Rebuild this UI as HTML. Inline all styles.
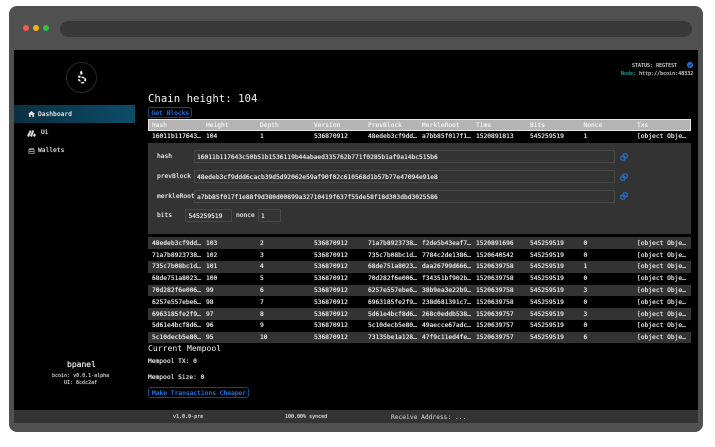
<!DOCTYPE html>
<html><head><meta charset="utf-8">
<style>
html,body{margin:0;padding:0;background:#fff;width:715px;height:447px;overflow:hidden}
body{position:relative;font-family:"DejaVu Sans Mono","Liberation Mono",monospace;color:#e8e8e8}
div,span{position:absolute;box-sizing:border-box;white-space:pre;line-height:1}
.b{filter:blur(.3px);text-shadow:0 0 .6px currentColor}
.t{font-size:6.25px}
.s{font-size:5px}
.row{left:148px;width:543px;height:11.8px}
.row span{top:3.6px;font-size:6.25px;color:#ececec}
.c0{left:4px}.c1{left:58px}.c2{left:112px}.c3{left:166px}.c4{left:220px}.c5{left:274px}.c6{left:328px}.c7{left:382px}.c8{left:435.5px}.c9{left:489px}
.g{background:#333}
.k{background:#000}
.inp{background:#333;border:1px solid #484848;height:13px;font-size:6.25px;padding:3.5px 0 0 2px;color:#ececec}
.btn{border:1px solid #114785;border-radius:3px;background:#000;color:#2379ea;font-size:6.25px;height:11px;padding:2.5px 0 0 2.5px}
.hd span{color:#f2f2f2}
</style></head>
<body>
<div style="left:9px;top:6px;width:694px;height:426px;background:#505050;border-radius:8px"></div>
<div style="left:60px;top:21px;width:632px;height:16px;background:#383838;border-radius:8px"></div>
<div style="left:23px;top:25px;width:6px;height:6px;border-radius:50%;background:#f4594f"></div>
<div style="left:33px;top:25px;width:6px;height:6px;border-radius:50%;background:#f5b011"></div>
<div style="left:43px;top:25px;width:6px;height:6px;border-radius:50%;background:#28c63f"></div>
<div style="left:14px;top:50px;width:684px;height:360px;background:#000"></div>
<div style="left:14px;top:410px;width:684px;height:13px;background:#333"></div>

<!-- sidebar -->
<div style="left:66px;top:62px;width:31px;height:31px;border:1px solid #2a2a2a;border-radius:50%"></div>
<svg style="position:absolute;left:74px;top:70px" width="15" height="17" viewBox="0 0 15 17"><g fill="#f4f4f4"><path d="M6 1.500l2-.5.6 3-2 1z"/><path d="M4.500 5.500l2.200.5-.5 2-2.200-.5z"/><path d="M4 9l2.200.5.5 2-2.200-.5z"/><path d="M7 12l3-.3.5 1.500-3 .4z"/><path d="M10.500 8l1.700.5-.3 3-1.700-.5z"/><path d="M7.500 6.500l3 .5-.5 1.500-2.500-.5z"/></g></svg>
<div style="left:14px;top:105px;width:121px;height:18px;background:linear-gradient(90deg,#0a3042,#0c4c68)"></div>
<svg style="position:absolute;left:28px;top:111px" width="7" height="6" viewBox="0 0 8 7"><path d="M4 0L8 3.500H7V7H5V4.500H3V7H1V3.500H0z" fill="#ddd"/></svg>
<div class="t b" style="left:38px;top:111.500px;color:#e8e8e8">Dashboard</div>
<svg style="position:absolute;left:27px;top:128.500px" width="9" height="8" viewBox="0 0 9 8"><path d="M0 7L3 1l1.500 1L2 8zM3 7l2.500-6L7 2 5 8zM6 7l1-3 2 2-1 2z" fill="#ddd"/></svg>
<div class="t b" style="left:41px;top:130px">Ui</div>
<svg style="position:absolute;left:27.500px;top:147px" width="7" height="7" viewBox="0 0 8 8"><path d="M1 3h6v4.500H1zM2 3V1.500h4V3M1 5h6" fill="none" stroke="#bbb" stroke-width=".8"/></svg>
<div class="t b" style="left:38px;top:148px;color:#ddd">Wallets</div>
<div class="b" style="left:67px;top:361px;font-size:8px">bpanel</div>
<div class="s b" style="left:52px;top:374px;color:#ccc">bcoin: v0.0.1-alpha</div>
<div class="s b" style="left:64px;top:381px;color:#ccc">UI: 8cdc2af</div>

<!-- top right -->
<div class="s b" style="left:632px;top:64px;color:#ccc">STATUS: REGTEST</div>
<div style="left:687px;top:62px;width:6px;height:6px;border-radius:50%;background:#2a75d6"></div>
<svg style="position:absolute;left:687px;top:62px" width="6" height="6" viewBox="0 0 6 6"><path d="M1.500 3l1.200 1.200L4.600 2" fill="none" stroke="#000" stroke-width=".8"/></svg>
<div class="s b" style="left:621px;top:72px;color:#ccc"><span style="position:static;color:#0c9c94">Node:</span> http://bcoin:48332</div>

<!-- main -->
<div class="b" style="left:148px;top:94px;font-size:10.700px;color:#f0f0f0;text-shadow:none">Chain height: 104</div>
<div class="btn b" style="left:148px;top:107px;width:44px">Get Blocks</div>

<div style="left:148px;top:119px;width:543px;height:12px;background:#b4b4b4;border:1px solid #e8e8e8;border-bottom-width:1.500px"></div>
<div class="row hd b" style="top:119px;height:12px"><span class="c0">Hash</span><span class="c1">Height</span><span class="c2">Depth</span><span class="c3">Version</span><span class="c4">PrevBlock</span><span class="c5">MerkleRoot</span><span class="c6">Time</span><span class="c7">Bits</span><span class="c8">Nonce</span><span class="c9">Txs</span></div>
<div class="row k b" style="top:131px"><span class="c0" style="top:3px">16011b117643…</span><span class="c1" style="top:3px">104</span><span class="c2" style="top:3px">1</span><span class="c3" style="top:3px">536870912</span><span class="c4" style="top:3px">48edeb3cf9dd…</span><span class="c5" style="top:3px">a7bb85f017f1…</span><span class="c6" style="top:3px">1520891813</span><span class="c7" style="top:3px">545259519</span><span class="c8" style="top:3px">1</span><span class="c9" style="top:3px">[object Obje…</span></div>

<div class="g" style="left:148px;top:142.500px;width:543px;height:91.500px"></div>
<div class="t b" style="left:157px;top:154px">hash</div>
<div class="inp b" style="left:194px;top:150px;width:421px">16011b117643c50b51b1536119b44abaed335762b771f0285b1af9a14bc515b6</div>
<div class="t b" style="left:157px;top:173.500px">prevBlock</div>
<div class="inp b" style="left:194px;top:170px;width:421px">48edeb3cf9ddd6cacb39d5d92062e59af90f02c610568d1b57b77e47094e91e8</div>
<div class="t b" style="left:157px;top:193.500px">merkleRoot</div>
<div class="inp b" style="left:194px;top:190px;width:421px">a7bb85f017f1e88f9d380d00899a32710419f637f55de58f18d303dbd3025586</div>
<div class="t b" style="left:157px;top:213px">bits</div>
<div class="inp b" style="left:185px;top:209px;width:47px;padding-left:2.500px">545259519</div>
<div class="t b" style="left:236px;top:213px">nonce</div>
<div class="inp b" style="left:258px;top:209px;width:23px">1</div>

<svg style="position:absolute;left:620px;top:153px" width="8" height="8" viewBox="0 0 8 8"><g fill="none" stroke="#2a6fc9" stroke-width="1.100"><rect x="3" y=".8" width="4.200" height="4.200" rx="1.500"/><rect x=".8" y="3" width="4.200" height="4.200" rx="1.500"/></g></svg>
<svg style="position:absolute;left:620px;top:172.500px" width="8" height="8" viewBox="0 0 8 8"><g fill="none" stroke="#2a6fc9" stroke-width="1.100"><rect x="3" y=".8" width="4.200" height="4.200" rx="1.500"/><rect x=".8" y="3" width="4.200" height="4.200" rx="1.500"/></g></svg>
<svg style="position:absolute;left:620px;top:192px" width="8" height="8" viewBox="0 0 8 8"><g fill="none" stroke="#2a6fc9" stroke-width="1.100"><rect x="3" y=".8" width="4.200" height="4.200" rx="1.500"/><rect x=".8" y="3" width="4.200" height="4.200" rx="1.500"/></g></svg>

<div class="row g b" style="top:237.300px"><span class="c0">48edeb3cf9dd…</span><span class="c1">103</span><span class="c2">2</span><span class="c3">536870912</span><span class="c4">71a7b8923738…</span><span class="c5">f2de5b43eaf7…</span><span class="c6">1520891696</span><span class="c7">545259519</span><span class="c8">0</span><span class="c9">[object Obje…</span></div>
<div class="row k b" style="top:249.100px"><span class="c0">71a7b8923738…</span><span class="c1">102</span><span class="c2">3</span><span class="c3">536870912</span><span class="c4">735c7b08bc1d…</span><span class="c5">7784c2de1386…</span><span class="c6">1520640542</span><span class="c7">545259519</span><span class="c8">0</span><span class="c9">[object Obje…</span></div>
<div class="row g b" style="top:260.900px"><span class="c0">735c7b08bc1d…</span><span class="c1">101</span><span class="c2">4</span><span class="c3">536870912</span><span class="c4">68de751a8023…</span><span class="c5">daa26799d666…</span><span class="c6">1520639758</span><span class="c7">545259519</span><span class="c8">1</span><span class="c9">[object Obje…</span></div>
<div class="row k b" style="top:272.700px"><span class="c0">68de751a8023…</span><span class="c1">100</span><span class="c2">5</span><span class="c3">536870912</span><span class="c4">70d282f6e006…</span><span class="c5">f34351bf902b…</span><span class="c6">1520639758</span><span class="c7">545259519</span><span class="c8">0</span><span class="c9">[object Obje…</span></div>
<div class="row g b" style="top:284.500px"><span class="c0">70d282f6e006…</span><span class="c1">99</span><span class="c2">6</span><span class="c3">536870912</span><span class="c4">6257e557ebe6…</span><span class="c5">38b9ea3e22b9…</span><span class="c6">1520639758</span><span class="c7">545259519</span><span class="c8">3</span><span class="c9">[object Obje…</span></div>
<div class="row k b" style="top:296.300px"><span class="c0">6257e557ebe6…</span><span class="c1">98</span><span class="c2">7</span><span class="c3">536870912</span><span class="c4">6963185fe2f9…</span><span class="c5">238d681391c7…</span><span class="c6">1520639758</span><span class="c7">545259519</span><span class="c8">0</span><span class="c9">[object Obje…</span></div>
<div class="row g b" style="top:308.100px"><span class="c0">6963185fe2f9…</span><span class="c1">97</span><span class="c2">8</span><span class="c3">536870912</span><span class="c4">5d61e4bcf8d6…</span><span class="c5">268c0eddb538…</span><span class="c6">1520639757</span><span class="c7">545259519</span><span class="c8">3</span><span class="c9">[object Obje…</span></div>
<div class="row k b" style="top:319.900px"><span class="c0">5d61e4bcf8d6…</span><span class="c1">96</span><span class="c2">9</span><span class="c3">536870912</span><span class="c4">5c10decb5e80…</span><span class="c5">49aecce67adc…</span><span class="c6">1520639757</span><span class="c7">545259519</span><span class="c8">0</span><span class="c9">[object Obje…</span></div>
<div class="row g b" style="top:331.700px"><span class="c0">5c10decb5e80…</span><span class="c1">95</span><span class="c2">10</span><span class="c3">536870912</span><span class="c4">73135be1a128…</span><span class="c5">47f9c11ed4fe…</span><span class="c6">1520639757</span><span class="c7">545259519</span><span class="c8">6</span><span class="c9">[object Obje…</span></div>

<div class="b" style="left:148px;top:344px;font-size:8.100px;color:#eee;text-shadow:none">Current Mempool</div>
<div class="t b" style="left:148px;top:359px">Mempool TX: 0</div>
<div class="t b" style="left:148px;top:375px">Mempool Size: 0</div>
<div class="btn b" style="left:148px;top:387px;width:101px;padding-left:3px">Make Transactions Cheaper</div>

<!-- status bar -->
<div class="s b" style="left:173px;top:415px;color:#ddd">v1.0.0-pre</div>
<div class="s b" style="left:285px;top:415px;color:#ddd">100.00% synced</div>
<div class="t b" style="left:391px;top:414.500px;color:#ddd;text-shadow:none">Receive Address: ...</div>
</body></html>
